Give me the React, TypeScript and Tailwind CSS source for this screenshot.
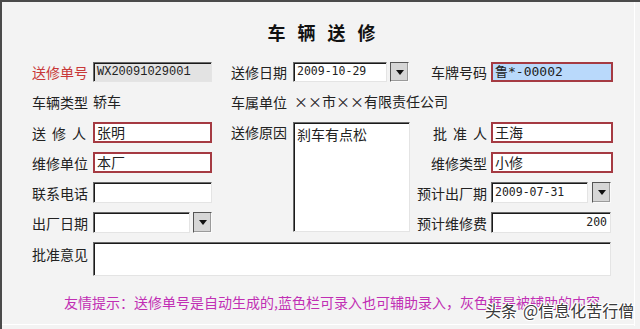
import React from "react";

const cjk = { fontFamily: '"Noto Sans CJK SC", "Noto Sans", sans-serif' };
const mono = { fontFamily: '"Liberation Mono", "Noto Sans CJK SC", monospace' };
const dmono = { fontFamily: '"DejaVu Sans Mono", "Noto Sans CJK SC", monospace' };

const sunken =
  "border border-[#e4e4e4] border-t-[#6a6a6a] border-l-[#6a6a6a] shadow-[inset_1px_1px_0_#1a1a1a]";
const red = "border-2 border-[#a53a42]";

function Label({ children, className = "" }: { children: React.ReactNode; className?: string }) {
  return (
    <div className={`flex items-center text-[14px] leading-none text-[#222] ${className}`} style={cjk}>
      {children}
    </div>
  );
}

function Spread({ chars }: { chars: string[] }) {
  return (
    <div className="flex w-[54px] justify-between">
      {chars.map((c, i) => (
        <span key={i}>{c}</span>
      ))}
    </div>
  );
}

function DropBtn() {
  return (
    <div className="flex h-full w-[19px] items-center justify-center border border-[#fafafa] border-t-[#555] border-l-[#555] bg-[#d6d6d6] shadow-[inset_-1px_-1px_0_#9a9a9a]">
      <svg width="8" height="5" viewBox="0 0 8 5">
        <path d="M0 0 L8 0 L4 5 Z" fill="#111" />
      </svg>
    </div>
  );
}

export default function App() {
  return (
    <div
      className="relative h-[329px] w-[640px] overflow-hidden border-t-2 border-l-2 border-[#4a4a4a] bg-[#f3f3f3]"
      style={cjk}
    >
      <div className="absolute right-[5px] top-0 h-[324px] w-px bg-white" />
      <div className="absolute bottom-[4px] left-0 h-px w-[632px] bg-white" />

      {/* Title */}
      <div className="flex justify-center gap-[12px] pt-[18px] pl-[1px] text-[18px] font-bold leading-[24px] text-[#111]">
        <span>车</span>
        <span>辆</span>
        <span>送</span>
        <span>修</span>
      </div>

      {/* Form grid */}
      <div className="mt-[18px] grid grid-cols-[61px_119px_19px_62px_117px_81px_122px] grid-rows-[20px_22px_21px_21px_21px_21px_34px] gap-y-[9px] pl-[30px]">
        {/* Row 1 */}
        <Label className="text-[#c83838]">送修单号</Label>
        <div className={`flex items-center bg-[#e3e3e3] pl-[3px] text-[12px] text-[#222] ${sunken}`} style={mono}>
          WX20091029001
        </div>
        <div />
        <Label>送修日期</Label>
        <div className="flex h-full gap-[3px]">
          <div className={`flex w-[94px] items-center bg-white pl-[3px] text-[11.5px] text-[#222] ${sunken}`} style={dmono}>
            2009-10-29
          </div>
          <DropBtn />
        </div>
        <Label className="justify-end pr-[4px]">车牌号码</Label>
        <div className={`flex items-center bg-[#b9d9fb] pl-[2px] text-[13px] text-[#222] ${red}`} style={dmono}>
          鲁*-00002
        </div>

        {/* Row 2 */}
        <Label>车辆类型</Label>
        <Label className="pb-[2px]">轿车</Label>
        <div />
        <Label>车属单位</Label>
        <Label className="col-span-3 pl-[1px] pb-[2px]">××市××有限责任公司</Label>

        {/* Row 3 */}
        <Label>
          <Spread chars={["送", "修", "人"]} />
        </Label>
        <div className={`flex items-center bg-white pl-[2px] text-[14px] text-[#222] ${red}`}>张明</div>
        <div />
        <Label className="items-start pt-[3px]">送修原因</Label>
        <div
          className={`row-span-4 bg-white pl-[3px] pt-[2px] text-[14px] leading-[18px] text-[#222] ${sunken}`}
          style={{ height: 110 }}
        >
          刹车有点松
        </div>
        <Label className="justify-end pr-[4px]">
          <Spread chars={["批", "准", "人"]} />
        </Label>
        <div className={`flex items-center bg-white pl-[2px] text-[14px] text-[#222] ${red}`}>王海</div>

        {/* Row 4 */}
        <Label>维修单位</Label>
        <div className={`flex items-center bg-white pl-[2px] text-[14px] text-[#222] ${red}`}>本厂</div>
        <div />
        <div />
        <Label className="justify-end pr-[4px]">维修类型</Label>
        <div className={`flex items-center bg-white pl-[2px] text-[14px] text-[#222] ${red}`}>小修</div>

        {/* Row 5 */}
        <Label>联系电话</Label>
        <div className={`bg-white ${sunken}`} />
        <div />
        <div />
        <Label className="justify-end pr-[4px]">预计出厂期</Label>
        <div className="flex h-full gap-[4px]">
          <div className={`flex w-[97px] items-center bg-white pl-[3px] text-[11.5px] text-[#222] ${sunken}`} style={dmono}>
            2009-07-31
          </div>
          <DropBtn />
        </div>

        {/* Row 6 */}
        <Label>出厂日期</Label>
        <div className="flex h-full gap-[3px]">
          <div className={`w-[97px] bg-white ${sunken}`} />
          <DropBtn />
        </div>
        <div />
        <div />
        <Label className="justify-end pr-[4px]">预计维修费</Label>
        <div
          className={`flex w-[120px] items-center justify-end bg-white pr-[3px] text-[11.5px] text-[#222] ${sunken}`}
          style={dmono}
        >
          200
        </div>

        {/* Row 7 */}
        <Label className="items-start pt-[5px]">批准意见</Label>
        <div className={`col-span-6 w-[518px] bg-white ${sunken}`} />
      </div>

      {/* Hint */}
      <div className="mt-[16px] whitespace-nowrap pl-[62px] text-[14px] leading-[20px] text-[#c12fb4]">
        友情提示：送修单号是自动生成的,蓝色栏可录入也可辅助录入，灰色框是被辅助的内容
      </div>

      {/* Watermark */}
      <div
        className="absolute left-[483px] top-[298px] flex items-center gap-[6px] whitespace-nowrap text-[16px] leading-[20px] text-[#3a3a3a]"
        style={{
          textShadow:
            "1px 0 0 #fff, -1px 0 0 #fff, 0 1px 0 #fff, 0 -1px 0 #fff, 1px 1px 0 #fff, -1px -1px 0 #fff, 1px -1px 0 #fff, -1px 1px 0 #fff",
        }}
      >
        <span>头条</span>
        <span>@信息化苦行僧</span>
      </div>
    </div>
  );
}
